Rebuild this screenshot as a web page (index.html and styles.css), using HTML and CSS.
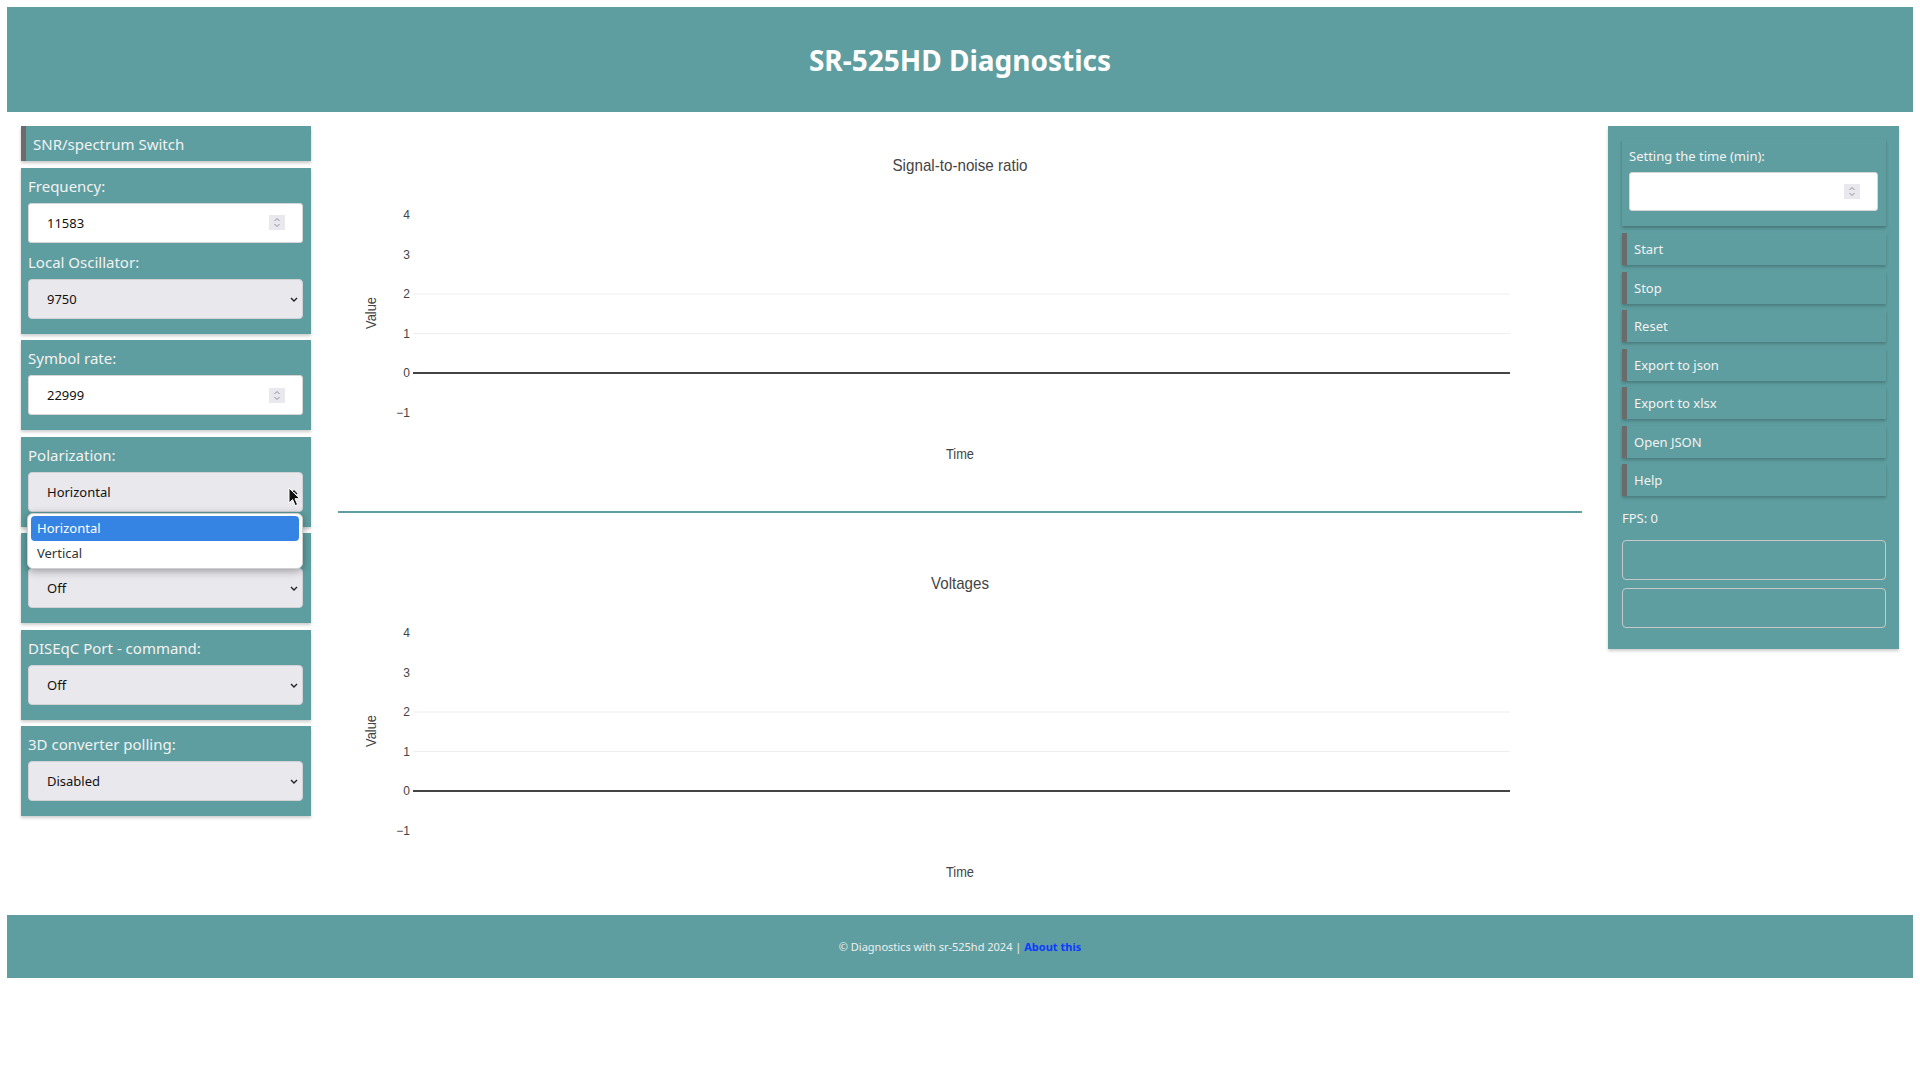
FILE: index.html
```html
<!DOCTYPE html>
<html>
<head>
	<meta charset="utf-8">
	<title>SR-525HD Diagnostics</title>
	<link rel="stylesheet" href="styles.css">
</head>
<body>
	<header class="top">
		<h1>SR-525HD Diagnostics</h1>
	</header>

	<div class="container">
		<div class="sidebar">
			<button class="switch">SNR/spectrum Switch</button>

			<div class="panel">
				<label for="frequency">Frequency:</label>
				<div class="number">
					<input type="number" id="frequency" value="11583">
					<span class="spin"><svg width="8" height="11" viewBox="0 0 8 11"><path d="M1.5 4 L4 1.5 L6.5 4 M1.5 7 L4 9.5 L6.5 7" fill="none" stroke="#8c8c94" stroke-width="1"/></svg></span>
				</div>
				<label for="lo">Local Oscillator:</label>
				<div class="select">
					<select id="lo">
						<option>9750</option>
						<option>10600</option>
					</select>
					<svg class="chevron" width="8" height="5" viewBox="0 0 8 5"><path d="M1 1 L4 4 L7 1" fill="none" stroke="#222" stroke-width="1.4"/></svg>
				</div>
			</div>

			<div class="panel">
				<label for="symbolRate">Symbol rate:</label>
				<div class="number">
					<input type="number" id="symbolRate" value="22999">
					<span class="spin"><svg width="8" height="11" viewBox="0 0 8 11"><path d="M1.5 4 L4 1.5 L6.5 4 M1.5 7 L4 9.5 L6.5 7" fill="none" stroke="#8c8c94" stroke-width="1"/></svg></span>
				</div>
			</div>

			<div class="panel">
				<label for="polarization">Polarization:</label>
				<div class="select">
					<select id="polarization">
						<option>Horizontal</option>
						<option>Vertical</option>
					</select>
					<svg class="chevron" width="8" height="5" viewBox="0 0 8 5"><path d="M1 4 L4 1 L7 4" fill="none" stroke="#222" stroke-width="1.4"/></svg>
				</div>
				<!-- открытый список -->
				<div class="dropdown">
					<div class="active">Horizontal</div>
					<div>Vertical</div>
				</div>
				<svg class="cursor" width="13" height="20" viewBox="0 0 13 20"><path d="M1 1 L1 16 L4.6 12.6 L7.2 18.6 L9.6 17.6 L7 11.7 L11.8 11.7 Z" fill="#111" stroke="#fff" stroke-width="1"/></svg>
			</div>

			<div class="panel">
				<label for="tone">22 kHz tone:</label>
				<div class="select">
					<select id="tone">
						<option>Off</option>
						<option>On</option>
					</select>
					<svg class="chevron" width="8" height="5" viewBox="0 0 8 5"><path d="M1 1 L4 4 L7 1" fill="none" stroke="#222" stroke-width="1.4"/></svg>
				</div>
			</div>

			<div class="panel">
				<label for="diseqc">DISEqC Port - command:</label>
				<div class="select">
					<select id="diseqc">
						<option>Off</option>
						<option>Port 1</option>
						<option>Port 2</option>
					</select>
					<svg class="chevron" width="8" height="5" viewBox="0 0 8 5"><path d="M1 1 L4 4 L7 1" fill="none" stroke="#222" stroke-width="1.4"/></svg>
				</div>
			</div>

			<div class="panel">
				<label for="polling">3D converter polling:</label>
				<div class="select">
					<select id="polling">
						<option>Disabled</option>
						<option>Enabled</option>
					</select>
					<svg class="chevron" width="8" height="5" viewBox="0 0 8 5"><path d="M1 1 L4 4 L7 1" fill="none" stroke="#222" stroke-width="1.4"/></svg>
				</div>
			</div>
		</div>

		<div class="charts">
			<svg class="chart" viewBox="0 0 1244 360">
				<text class="ctitle" x="622" y="45" text-anchor="middle" textLength="135" lengthAdjust="spacingAndGlyphs">Signal-to-noise ratio</text>
				<line class="grid" x1="75" x2="1172" y1="168" y2="168"/>
				<line class="grid" x1="75" x2="1172" y1="207.5" y2="207.5"/>
				<line class="zero" x1="75" x2="1172" y1="247" y2="247"/>
				<g class="ticks" text-anchor="end">
					<text x="72" y="93">4</text>
					<text x="72" y="132.5">3</text>
					<text x="72" y="172">2</text>
					<text x="72" y="211.5">1</text>
					<text x="72" y="251">0</text>
					<text x="72" y="290.5">−1</text>
				</g>
				<text class="axis" transform="translate(38,187) rotate(-90)" text-anchor="middle" textLength="32" lengthAdjust="spacingAndGlyphs">Value</text>
				<text class="axis" x="622" y="333" text-anchor="middle" textLength="28" lengthAdjust="spacingAndGlyphs">Time</text>
			</svg>

			<div class="divider"></div>

			<svg class="chart" viewBox="0 0 1244 360">
				<text class="ctitle" x="622" y="45" text-anchor="middle" textLength="58" lengthAdjust="spacingAndGlyphs">Voltages</text>
				<line class="grid" x1="75" x2="1172" y1="168" y2="168"/>
				<line class="grid" x1="75" x2="1172" y1="207.5" y2="207.5"/>
				<line class="zero" x1="75" x2="1172" y1="247" y2="247"/>
				<g class="ticks" text-anchor="end">
					<text x="72" y="93">4</text>
					<text x="72" y="132.5">3</text>
					<text x="72" y="172">2</text>
					<text x="72" y="211.5">1</text>
					<text x="72" y="251">0</text>
					<text x="72" y="290.5">−1</text>
				</g>
				<text class="axis" transform="translate(38,187) rotate(-90)" text-anchor="middle" textLength="32" lengthAdjust="spacingAndGlyphs">Value</text>
				<text class="axis" x="622" y="333" text-anchor="middle" textLength="28" lengthAdjust="spacingAndGlyphs">Time</text>
			</svg>
		</div>

		<div class="controls">
			<div class="timebox">
				<label for="time">Setting the time (min):</label>
				<div class="number">
					<input type="number" id="time">
					<span class="spin"><svg width="8" height="11" viewBox="0 0 8 11"><path d="M1.5 4 L4 1.5 L6.5 4 M1.5 7 L4 9.5 L6.5 7" fill="none" stroke="#8c8c94" stroke-width="1"/></svg></span>
				</div>
			</div>
			<button class="btn">Start</button>
			<button class="btn">Stop</button>
			<button class="btn">Reset</button>
			<button class="btn">Export to json</button>
			<button class="btn">Export to xlsx</button>
			<button class="btn">Open JSON</button>
			<button class="btn">Help</button>
			<div class="fps">FPS: 0</div>
			<div class="outbox"></div>
			<div class="outbox"></div>
		</div>
	</div>

	<footer class="bottom">
		<span>© Diagnostics with sr-525hd 2024 | <a href="#">About this</a></span>
	</footer>
</body>
</html>
```

FILE: styles.css
```css
body {
	margin: 7px;
	font-family: "Noto Sans", "Open Sans", sans-serif;
	background: #fff;
}

.top {
	background: cadetblue;
	height: 105px;
	display: flex;
	align-items: center;
	justify-content: center;
}

.top h1 {
	margin: 0;
	color: #fff;
	font-size: 28px;
	font-weight: bold;
}

.container {
	display: flex;
	align-items: flex-start;
	padding: 14px 14px 0;
}

/* левая колонка */
.sidebar {
	width: 290px;
	display: flex;
	flex-direction: column;
	gap: 6.5px;
}

.switch, .btn {
	background: cadetblue;
	border: none;
	border-left: 5px solid #6b6b6b;
	color: #f2f2f2;
	font-family: "Noto Sans", "Open Sans", sans-serif;
	text-align: left;
	padding: 0 0 0 7px;
	box-shadow: 0 2px 3px rgba(0, 0, 0, 0.22);
}

.switch {
	height: 35px;
	font-size: 15px;
}

.panel {
	position: relative;
	background: cadetblue;
	padding: 7px 8px 15px 7px;
	box-shadow: 0 2px 3px rgba(0, 0, 0, 0.2);
}

.panel label {
	display: block;
	color: #f2f2f2;
	font-size: 15px;
	line-height: 22px;
	margin-bottom: 6px;
}

.panel div + label {
	margin-top: 8px;
}

.number, .select {
	position: relative;
	height: 40px;
	box-sizing: border-box;
}

.number {
	display: flex;
	align-items: center;
	background: #fff;
	border: 1px solid #d6d6d6;
	border-radius: 3px;
	padding: 0 17px 0 18px;
}

.number input {
	flex: 1;
	min-width: 0;
	border: none;
	outline: none;
	background: transparent;
	padding: 0;
	font-family: "Noto Sans", "Open Sans", sans-serif;
	font-size: 13px;
	color: #111;
	-moz-appearance: textfield;
}

.number input::-webkit-inner-spin-button,
.number input::-webkit-outer-spin-button {
	-webkit-appearance: none;
	margin: 0;
}

.spin {
	width: 16px;
	height: 15px;
	background: #e8e8ee;
	display: flex;
	align-items: center;
	justify-content: center;
}

.select select {
	width: 100%;
	height: 40px;
	-webkit-appearance: none;
	appearance: none;
	background: #e9e8ed;
	border: 1px solid #d2d2d6;
	border-radius: 4px;
	padding: 0 0 0 18px;
	font-family: "Noto Sans", "Open Sans", sans-serif;
	font-size: 13px;
	color: #111;
	outline: none;
}

.chevron {
	position: absolute;
	right: 5px;
	top: 18px;
}

.dropdown {
	position: absolute;
	top: 76px;
	left: 6px;
	width: 276px;
	box-sizing: border-box;
	background: #fff;
	border: 1px solid #cfcfcf;
	border-radius: 6px;
	padding: 2px 3px;
	box-shadow: 0 2px 8px rgba(0, 0, 0, 0.35);
	z-index: 2;
	font-size: 13px;
}

.dropdown div {
	height: 25px;
	line-height: 25px;
	padding: 0 6px;
	color: #2e3436;
	border-radius: 4px;
}

.dropdown .active {
	background: #3584e4;
	color: #fff;
}

.cursor {
	position: absolute;
	left: 267px;
	top: 50px;
	z-index: 3;
}

/* графики */
.charts {
	flex: 1;
	padding: 0 26px 0 27px;
}

.chart {
	display: block;
	width: 100%;
	height: 360px;
	font-family: "Liberation Sans", Arial, sans-serif;
}

.ctitle {
	font-size: 17px;
	fill: #444;
}

.axis {
	font-size: 14px;
	fill: #444;
}

.ticks {
	font-size: 12px;
	fill: #444;
}

.grid {
	stroke: #eee;
	stroke-width: 1;
}

.zero {
	stroke: #444;
	stroke-width: 2;
}

.divider {
	height: 2px;
	background: cadetblue;
	margin: 25px 0 31px;
}

/* правая колонка */
.controls {
	width: 291px;
	box-sizing: border-box;
	background: cadetblue;
	padding: 13px 13px 21px 14px;
	box-shadow: 0 2px 3px rgba(0, 0, 0, 0.2);
	display: flex;
	flex-direction: column;
}

.timebox {
	background: cadetblue;
	padding: 7px 8px 15px 7px;
	margin-bottom: 7px;
	box-shadow: 0 2px 3px rgba(0, 0, 0, 0.25);
}

.timebox label {
	display: block;
	color: #f2f2f2;
	font-size: 13px;
	line-height: 20px;
	margin-bottom: 6px;
}

.timebox .number {
	height: 39px;
}

.btn {
	height: 32px;
	font-size: 13px;
	margin-bottom: 6.5px;
}

.fps {
	color: #f2f2f2;
	font-size: 13px;
	line-height: 20px;
	margin: 5.5px 0 12px;
}

.outbox {
	height: 40px;
	box-sizing: border-box;
	border: 1px solid #c8c8c8;
	border-radius: 4px;
}

.outbox + .outbox {
	margin-top: 8px;
}

.bottom {
	background: cadetblue;
	height: 63px;
	margin-top: 11px;
	display: flex;
	align-items: center;
	justify-content: center;
	color: #eee;
	font-size: 11px;
}

.bottom a {
	color: #0a3cff;
	font-weight: bold;
	text-decoration: none;
}
```
